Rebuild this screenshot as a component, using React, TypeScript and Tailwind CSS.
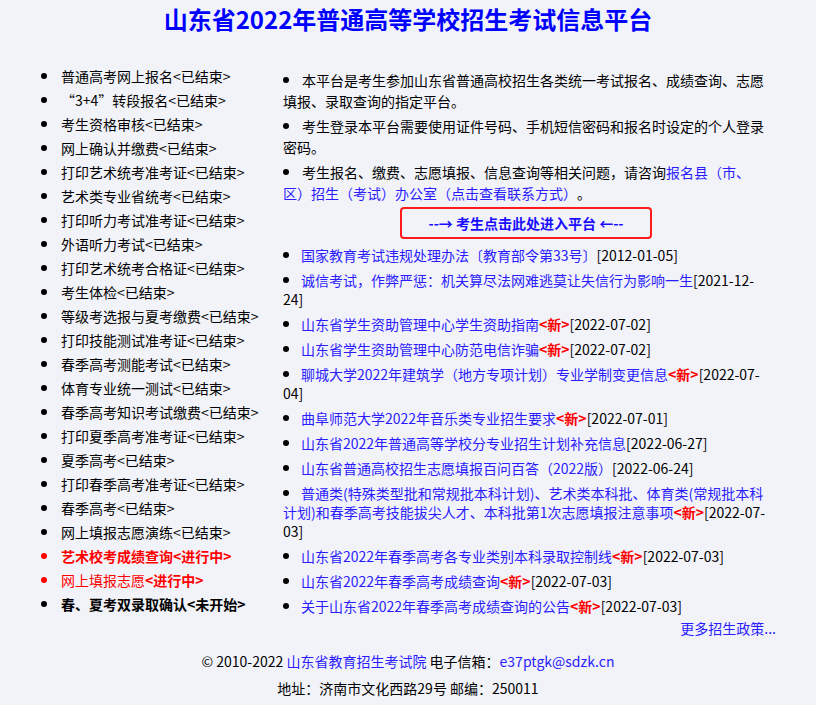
import React from 'react';

const LINK = 'text-[#2a1cff]';

const leftItems: { text: string; tail: string; kind?: 'red' | 'redTail' | 'bold' }[] = [
  { text: '普通高考网上报名', tail: '<已结束>' },
  { text: '“3+4”转段报名', tail: '<已结束>' },
  { text: '考生资格审核', tail: '<已结束>' },
  { text: '网上确认并缴费', tail: '<已结束>' },
  { text: '打印艺术统考准考证', tail: '<已结束>' },
  { text: '艺术类专业省统考', tail: '<已结束>' },
  { text: '打印听力考试准考证', tail: '<已结束>' },
  { text: '外语听力考试', tail: '<已结束>' },
  { text: '打印艺术统考合格证', tail: '<已结束>' },
  { text: '考生体检', tail: '<已结束>' },
  { text: '等级考选报与夏考缴费', tail: '<已结束>' },
  { text: '打印技能测试准考证', tail: '<已结束>' },
  { text: '春季高考测能考试', tail: '<已结束>' },
  { text: '体育专业统一测试', tail: '<已结束>' },
  { text: '春季高考知识考试缴费', tail: '<已结束>' },
  { text: '打印夏季高考准考证', tail: '<已结束>' },
  { text: '夏季高考', tail: '<已结束>' },
  { text: '打印春季高考准考证', tail: '<已结束>' },
  { text: '春季高考', tail: '<已结束>' },
  { text: '网上填报志愿演练', tail: '<已结束>' },
  { text: '艺术校考成绩查询', tail: '<进行中>', kind: 'red' },
  { text: '网上填报志愿', tail: '<进行中>', kind: 'redTail' },
  { text: '春、夏考双录取确认', tail: '<未开始>', kind: 'bold' },
];

const news: { title: string; isNew?: boolean; date: string }[] = [
  { title: '国家教育考试违规处理办法〔教育部令第33号〕', date: '[2012-01-05]' },
  { title: '诚信考试，作弊严惩：机关算尽法网难逃莫让失信行为影响一生', date: '[2021-12-24]' },
  { title: '山东省学生资助管理中心学生资助指南', isNew: true, date: '[2022-07-02]' },
  { title: '山东省学生资助管理中心防范电信诈骗', isNew: true, date: '[2022-07-02]' },
  { title: '聊城大学2022年建筑学（地方专项计划）专业学制变更信息', isNew: true, date: '[2022-07-04]' },
  { title: '曲阜师范大学2022年音乐类专业招生要求', isNew: true, date: '[2022-07-01]' },
  { title: '山东省2022年普通高等学校分专业招生计划补充信息', date: '[2022-06-27]' },
  { title: '山东省普通高校招生志愿填报百问百答（2022版）', date: '[2022-06-24]' },
  {
    title: '普通类(特殊类型批和常规批本科计划)、艺术类本科批、体育类(常规批本科计划)和春季高考技能拔尖人才、本科批第1次志愿填报注意事项',
    isNew: true,
    date: '[2022-07-03]',
  },
  { title: '山东省2022年春季高考各专业类别本科录取控制线', isNew: true, date: '[2022-07-03]' },
  { title: '山东省2022年春季高考成绩查询', isNew: true, date: '[2022-07-03]' },
  { title: '关于山东省2022年春季高考成绩查询的公告', isNew: true, date: '[2022-07-03]' },
];

// list bullet, kept out of the line-height math
function Dot({ w, red }: { w: string; red?: boolean }) {
  return (
    <span className={`inline-block ${w} h-[6px] align-[3px]`}>
      <span className={`block w-[6px] h-[6px] rounded-full ${red ? 'bg-[#ff0000]' : 'bg-black'}`} />
    </span>
  );
}

export default function App() {
  return (
    <div
      className="min-h-[705px] w-[816px] bg-[#f2f3f9] text-black text-[14px] [text-spacing-trim:space-all]"
      style={{ fontFamily: '"Noto Sans CJK SC", sans-serif' }}
    >
      <h1 className="pt-[5px] text-center text-[24px] leading-[28px] font-bold text-[#0000ff]">
        山东省2022年普通高等学校招生考试信息平台
      </h1>

      <div className="mt-[31px] flex items-start pl-[41px]">
        {/* left: schedule */}
        <ul className="w-[242px] shrink-0">
          {leftItems.map((item, i) => {
            const red = item.kind === 'red' || item.kind === 'redTail';
            return (
              <li key={i} className="leading-[24px] whitespace-nowrap">
                <Dot w="w-[20px]" red={red} />
                {item.kind === 'red' && (
                  <span className="font-bold text-[#ff0000]">{item.text}{item.tail}</span>
                )}
                {item.kind === 'redTail' && (
                  <span className="text-[#ff0000]">
                    {item.text}
                    <b>{item.tail}</b>
                  </span>
                )}
                {item.kind === 'bold' && (
                  <span className="font-bold">{item.text}{item.tail}</span>
                )}
                {!item.kind && (
                  <span>{item.text}{item.tail}</span>
                )}
              </li>
            );
          })}
        </ul>

        {/* right: notices and news */}
        <div className="w-[487px] shrink-0 pt-[6px]">
          <p className="leading-[21px] mb-[4px]">
            <Dot w="w-[19px]" />
            本平台是考生参加山东省普通高校招生各类统一考试报名、成绩查询、志愿填报、录取查询的指定平台。
          </p>
          <p className="leading-[21px] mb-[4px]">
            <Dot w="w-[19px]" />
            考生登录本平台需要使用证件号码、手机短信密码和报名时设定的个人登录密码。
          </p>
          <p className="leading-[21px]">
            <Dot w="w-[19px]" />
            考生报名、缴费、志愿填报、信息查询等相关问题，请咨询
            <a className={LINK}>报名县（市、区）招生（考试）办公室（点击查看联系方式）</a>。
          </p>

          <a className="mt-[3px] ml-[117px] flex h-[32px] w-[252px] items-center justify-center rounded-[4px] border-2 border-[#ff1a1a] font-bold text-[#1a0dff]">
            --→ 考生点击此处进入平台 ←--
          </a>

          <ul className="mt-[4px]">
            {news.map((n, i) => (
              <li key={i} className="py-[3px] leading-[19px]">
                <Dot w="w-[18px]" />
                <a className={LINK}>{n.title}</a>
                {n.isNew && <b className="text-[#ff0000]">&lt;新&gt;</b>}
                {n.date}
              </li>
            ))}
          </ul>
          <div className={`-mr-[6px] text-right leading-[19px] ${LINK}`}>更多招生政策...</div>
        </div>
      </div>

      <footer className="mt-[10px] pb-[2px] text-center leading-[27px]">
        <div>
          © 2010-2022 <a className={LINK}>山东省教育招生考试院</a> 电子信箱：
          <a className={LINK}>e37ptgk@sdzk.cn</a>
        </div>
        <div>地址：济南市文化西路29号 邮编：250011</div>
      </footer>
    </div>
  );
}
